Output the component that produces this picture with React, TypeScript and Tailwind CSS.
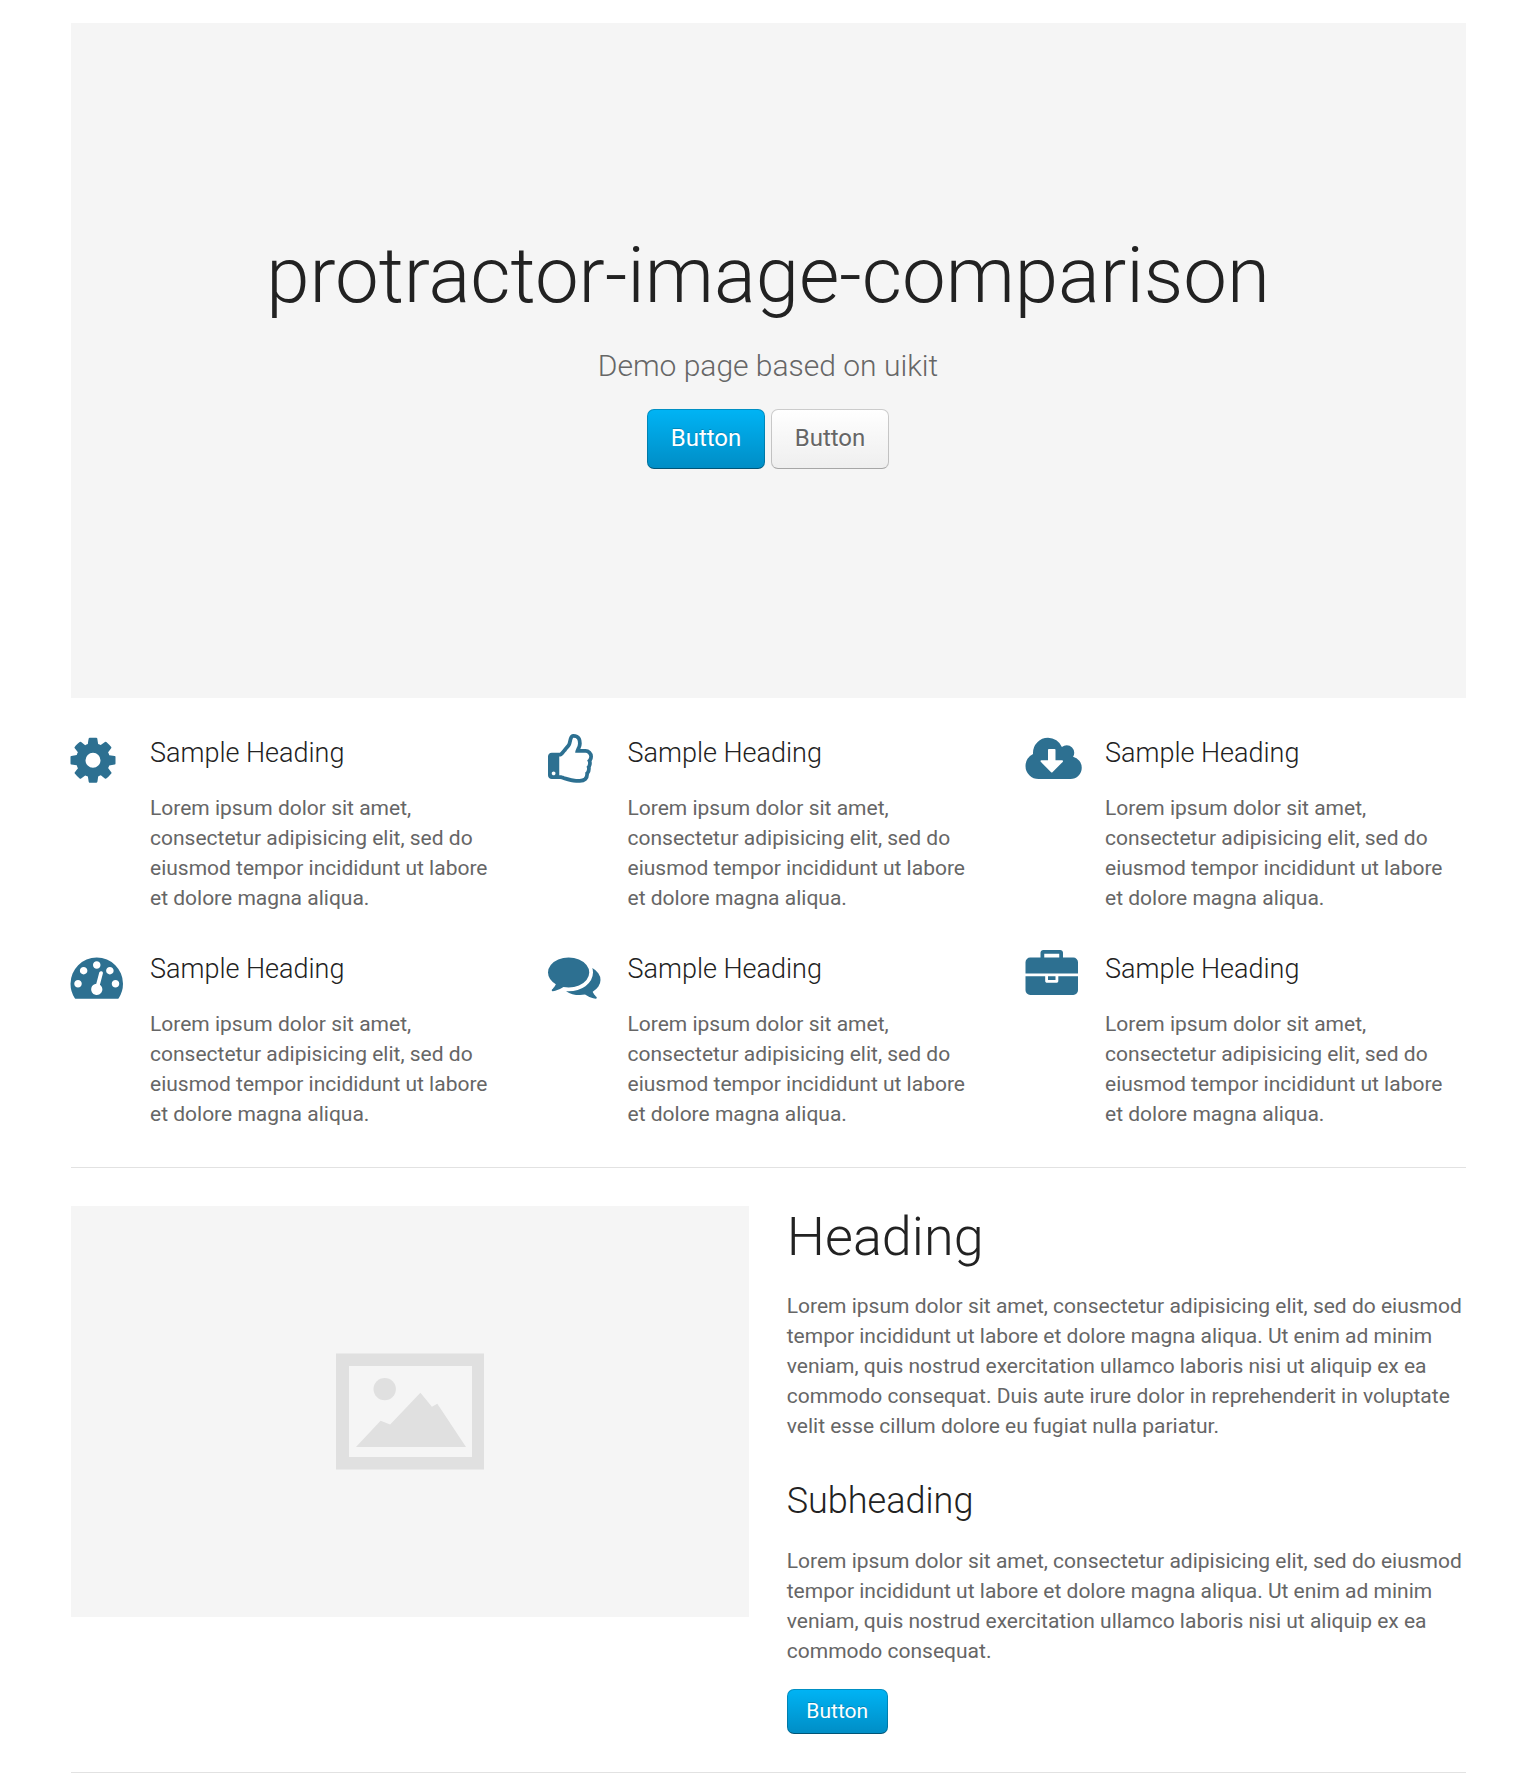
import React from 'react';

const lorem =
  'Lorem ipsum dolor sit amet, consectetur adipisicing elit, sed do eiusmod tempor incididunt ut labore et dolore magna aliqua.';
const loremLong =
  lorem + ' Ut enim ad minim veniam, quis nostrud exercitation ullamco laboris nisi ut aliquip ex ea commodo consequat.';

// Glyph outlines on a 1792-unit em, with their own advance widths.
const icons = [
  {
    name: 'cog',
    box: '17 0 1536 1792',
    size: 'w-[45px]',
    d: 'M1024 896q0-106-75-181t-181-75-181 75-75 181 75 181 181 75 181-75 75-181zm512-109v222q0 12-8 23t-20 13l-185 28q-19 54-39 91 35 50 107 138 10 12 10 25t-9 23q-27 37-99 108t-94 71q-12 0-26-9l-138-108q-44 23-91 38-16 136-29 186-7 28-36 28h-222q-14 0-24.5-8.5t-11.5-21.5l-28-184q-49-16-90-37l-141 107q-10 9-25 9-14 0-25-11-126-114-165-168-7-10-7-23 0-12 8-23 15-21 51-66.5t54-70.5q-27-50-41-99l-183-27q-13-2-21-12.5t-8-23.5v-222q0-12 8-23t19-13l186-28q14-46 39-92-40-57-107-138-10-12-10-24 0-10 9-23 26-36 98.5-107.5t94.5-71.5q13 0 26 10l138 107q44-23 91-38 16-136 29-186 7-28 36-28h222q14 0 24.5 8.5t11.5 21.5l28 184q49 16 90 37l142-107q9-9 24-9 13 0 25 10 129 119 165 170 7 8 7 22 0 12-8 23-15 21-51 66.5t-54 70.5q26 50 41 98l183 28q13 2 21 12.5t8 23.5z',
  },
  {
    name: 'thumbs-up',
    box: '0 0 1536 1792',
    size: 'w-[45px]',
    d: 'M256 1344q0-26-19-45t-45-19-45 19-19 45 19 45 45 19 45-19 19-45zM1408 768q0-51-39-89.5t-89-38.5h-352q0-58 48-159.5t48-160.5q0-98-32-145t-128-47q-26 26-38 85t-30.5 125.5-59.5 109.5q-22 23-77 91-4 5-23 30t-31.5 41-34.5 42.5-40 44-38.5 35.5-40 27-35.5 9h-32v640h32q13 0 31.5 3t33 6.5 38 11 35 11.5 35.5 12.5 29 10.5q211 73 342 73h121q192 0 192-167 0-26-5-56 30-16 47.5-52.5t17.5-73.5-18-69q53-50 53-119 0-25-10-55.5t-25-47.5q32-1 53.5-47t21.5-81zM1536 767q0 89-49 163 9 33 9 69 0 77-38 144 3 21 3 43 0 101-60 178 1 139-85 219.5t-227 80.5h-129q-96 0-189.5-22.5t-216.5-65.5q-116-40-138-40h-288q-53 0-90.5-37.5t-37.5-90.5v-640q0-53 37.5-90.5t90.5-37.5h274q36-24 137-155 58-75 107-128 24-25 35.5-85.5t30.5-126.5 62-108q39-37 90-37 84 0 151 32.5t102 101.5 35 186q0 93-48 192h176q104 0 180 76t76 179z',
  },
  {
    name: 'cloud-download',
    box: '17 0 1920 1792',
    size: 'w-[56.25px]',
    d: 'M1280 928q0-14-9-23t-23-9h-224v-352q0-13-9.5-22.5t-22.5-9.5h-192q-13 0-22.5 9.5t-9.5 22.5v352h-224q-13 0-22.5 9.5t-9.5 22.5q0 14 9 23l352 352q9 9 23 9t23-9l351-351q10-12 10-24zm640 224q0 159-112.5 271.5t-271.5 112.5h-1088q-185 0-316.5-131.5t-131.5-316.5q0-130 70-240t188-165q-2-30-2-43 0-212 150-362t362-150q156 0 285.5 87t188.5 231q71-62 166-62 106 0 181 75t75 181q0 76-41 138 130 31 213.5 135.5t83.5 238.5z',
  },
  {
    name: 'dashboard',
    box: '17 0 1792 1792',
    size: 'w-[52.5px]',
    d: 'M384 1152q0-53-37.5-90.5t-90.5-37.5-90.5 37.5-37.5 90.5 37.5 90.5 90.5 37.5 90.5-37.5 37.5-90.5zm192-448q0-53-37.5-90.5t-90.5-37.5-90.5 37.5-37.5 90.5 37.5 90.5 90.5 37.5 90.5-37.5 37.5-90.5zm428 481l101-382q6-26-7.5-48.5t-38.5-29.5-48 6.5-30 39.5l-101 382q-60 5-107 43.5t-63 98.5q-20 77 20 146t117 89 146-20 89-117q16-60-6-117t-72-91zm660-33q0-53-37.5-90.5t-90.5-37.5-90.5 37.5-37.5 90.5 37.5 90.5 90.5 37.5 90.5-37.5 37.5-90.5zm-640-640q0-53-37.5-90.5t-90.5-37.5-90.5 37.5-37.5 90.5 37.5 90.5 90.5 37.5 90.5-37.5 37.5-90.5zm448 192q0-53-37.5-90.5t-90.5-37.5-90.5 37.5-37.5 90.5 37.5 90.5 90.5 37.5 90.5-37.5 37.5-90.5zm320 448q0 261-141 483-19 29-54 29h-1402q-35 0-54-29-141-221-141-483 0-182 71-348t191-286 286-191 348-71 348 71 286 191 191 286 71 348z',
  },
  {
    name: 'comments',
    box: '0 0 1792 1792',
    size: 'w-[52.5px]',
    d: 'M1408 768q0 139-94 257t-256.5 186.5-353.5 68.5q-86 0-176-16-124 88-278 128-36 9-86 16h-3q-11 0-20.5-8t-11.5-21q-1-3-1-6.5t.5-6.5 2-6l2.5-5 3.5-5.5 4-5 4.5-5 4-4.5q5-6 23-25t26-29.5 22.5-29 25-38.5 20.5-44q-124-72-195-177t-71-224q0-139 94-257t256.5-186.5 353.5-68.5 353.5 68.5 256.5 186.5 94 257zm384 256q0 120-71 224.5t-195 176.5q10 24 20.5 44t25 38.5 22.5 29 26 29.5 23 25q1 1 4 4.5t4.5 5 4 5 3.5 5.5l2.5 5 2 6 .5 6.5-1 6.5q-3 14-13 22t-22 7q-50-7-86-16-154-40-278-128-90 16-176 16-271 0-472-132 58 4 88 4 161 0 309-45t264-129q125-92 192-212t67-254q0-77-23-152 129 71 204 178t75 230z',
  },
  {
    name: 'briefcase',
    box: '17 0 1792 1792',
    size: 'w-[52.5px]',
    d: 'M640 256h512v-128h-512v128zm1152 640v480q0 66-47 113t-113 47h-1472q-66 0-113-47t-47-113v-480h672v160q0 26 19 45t45 19h320q26 0 45-19t19-45v-160h672zm-768 0v128h-256v-128h256zm768-480v384h-1792v-384q0-66 47-113t113-47h352v-160q0-40 28-68t68-28h576q40 0 68 28t28 68v160h352q66 0 113 47t47 113z',
  },
];

const buttonBase =
  'block rounded-[7px] border border-black/20 bg-origin-border text-center';
const primary =
  'bg-linear-to-b from-[#00b4f5] to-[#008dc5] text-white [text-shadow:0_-1px_0_rgba(0,0,0,0.2)] border-b-black/40';
const secondary =
  'bg-linear-to-b from-white to-[#eee] text-[#666] [text-shadow:0_1px_0_#fff] border-b-black/30';

function Feature({ icon }: { icon: (typeof icons)[number] }) {
  return (
    <div className="flex h-[216px]">
      <div className="w-[79.5px] shrink-0">
        <svg viewBox={icon.box} fill="#2d7091" className={`h-[52.5px] overflow-visible ${icon.size}`} aria-label={icon.name}>
          <path d={icon.d} />
        </svg>
      </div>
      <div className="pt-1">
        <h3 className="text-[27px] leading-[30px] font-light text-[#222]">Sample Heading</h3>
        <p className="mt-[25px]">{lorem}</p>
      </div>
    </div>
  );
}

export default function App() {
  return (
    <div className="h-[1785px] overflow-hidden bg-white px-[70.5px] pt-[23px] font-[Roboto,sans-serif] text-[21px] leading-[30px] text-[#666]">
      <section className="flex h-[675px] flex-col items-center bg-[#f5f5f5] pt-[206px]">
        <h1 className="text-[78px] leading-[94px] font-light text-[#222]">protractor-image-comparison</h1>
        <p className="mt-[22px] text-[30px] leading-[42px] font-light">Demo page based on uikit</p>
        <div className="mt-[22px] flex gap-1.5 text-2xl">
          <button className={`${buttonBase} ${primary} h-[60px] w-[118px] pb-[3px]`}>Button</button>
          <button className={`${buttonBase} ${secondary} h-[60px] w-[118px] pb-[3px]`}>Button</button>
        </div>
      </section>

      <section className="mt-9 grid grid-cols-3 gap-x-[37.5px]">
        {icons.map((icon) => (
          <Feature key={icon.name} icon={icon} />
        ))}
      </section>

      <hr className="mt-px border-[#e2e2e2]" />

      <section className="mt-[38px] grid grid-cols-2 gap-x-[37.5px]">
        <div className="flex h-[411px] items-center justify-center bg-[#f5f5f5]">
          <svg viewBox="0 0.6 148 116" className="h-[116px] w-[148px] overflow-visible" fill="#e0e0e0">
            <path fillRule="evenodd" d="M0 0h148v116H0zM13 12.7v91h123v-91z" />
            <circle cx="48.7" cy="35.7" r="11.2" />
            <path d="M20 93.7 44.6 67.4 54.2 71 84.4 39.4 95.9 53.4 101.3 50.4 130 93.7z" />
          </svg>
        </div>
        <div className="-mt-px">
          <h1 className="text-[54px] leading-[63px] font-light text-[#222]">Heading</h1>
          <p className="mt-[23px]">{loremLong} Duis aute irure dolor in reprehenderit in voluptate velit esse cillum dolore eu fugiat nulla pariatur.</p>
          <h2 className="mt-[39px] text-4xl leading-[42px] font-light text-[#222]">Subheading</h2>
          <p className="mt-6">{loremLong}</p>
          <button className={`${buttonBase} ${primary} mt-[23px] h-[45px] w-[101px] pb-px leading-[30px]`}>Button</button>
        </div>
      </section>

      <hr className="mt-[38px] border-[#e2e2e2]" />
    </div>
  );
}
